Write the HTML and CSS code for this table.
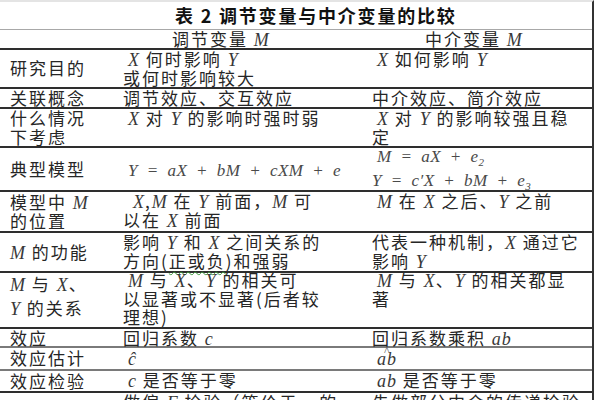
FILE: index.html
```html
<!DOCTYPE html>
<html lang="zh-CN">
<head>
<meta charset="utf-8">
<title>表 2 调节变量与中介变量的比较</title>
<link rel="stylesheet" href="styles.css">
</head>
<body>
<div class="page">
  <div class="title">表 2 调节变量与中介变量的比较</div>

  <div class="row hd">
    <div class="c1"></div>
    <div class="c2">调节变量 <i class="m">M</i></div>
    <div class="c3">中介变量 <i class="m">M</i></div>
  </div>

  <div class="row r1">
    <div class="c1">研究目的</div>
    <div class="c2 ind"><i class="m">X</i> 何时影响 <i class="m">Y</i><br>或何时影响较大</div>
    <div class="c3 ind"><i class="m">X</i> 如何影响 <i class="m">Y</i></div>
  </div>

  <div class="row r2">
    <div class="c1">关联概念</div>
    <div class="c2">调节效应、交互效应</div>
    <div class="c3">中介效应、简介效应</div>
  </div>

  <div class="row r3">
    <div class="c1">什么情况<br>下考虑</div>
    <div class="c2 ind"><i class="m">X</i> 对 <i class="m">Y</i> 的影响时强时弱</div>
    <div class="c3 ind"><i class="m">X</i> 对 <i class="m">Y</i> 的影响较强且稳<br>定</div>
  </div>

  <div class="row r4">
    <div class="c1">典型模型</div>
    <div class="c2 mid ind"><span class="f">Y = aX + bM + cXM + e</span></div>
    <div class="c3 ind fl"><span class="f">M = aX + e<sub>2</sub></span><br><span class="f">Y = c′X + bM + e<sub>3</sub></span></div>
  </div>

  <div class="row r5">
    <div class="c1">模型中 <i class="m">M</i><br>的位置</div>
    <div class="c2 ind2"><i class="m">X</i>,<i class="m">M</i> 在 <i class="m">Y</i> 前面，<i class="m">M</i> 可<br>以在 <i class="m">X</i> 前面</div>
    <div class="c3 ind"><i class="m">M</i> 在 <i class="m">X</i> 之后、<i class="m">Y</i> 之前</div>
  </div>

  <div class="row r6">
    <div class="c1"><i class="m">M</i> 的功能</div>
    <div class="c2">影响 <i class="m">Y</i> 和 <i class="m">X</i> 之间关系的<br>方向(<span class="wavy">正或负</span>)和强弱</div>
    <div class="c3">代表一种机制，<i class="m">X</i> 通过它<br>影响 <i class="m">Y</i></div>
  </div>

  <div class="row r7">
    <div class="c1 c1b"><i class="m">M</i> 与 <i class="m">X</i>、<br><i class="m">Y</i> 的关系</div>
    <div class="c2 ind up"><i class="m">M</i> 与 <i class="m">X</i>、<i class="m">Y</i> 的相关可<br>以显著或不显著(后者较<br>理想)</div>
    <div class="c3 ind up"><i class="m">M</i> 与 <i class="m">X</i>、<i class="m">Y</i> 的相关都显<br>著</div>
  </div>

  <div class="row r8">
    <div class="c1">效应</div>
    <div class="c2">回归系数 <i class="m">c</i></div>
    <div class="c3">回归系数乘积 <i class="m">ab</i></div>
  </div>

  <div class="row r9 light">
    <div class="c1">效应估计</div>
    <div class="c2 ind"><i class="m">ĉ</i></div>
    <div class="c3 ind"><span class="hatbox"><i class="m">ab</i><span class="hat">^</span></span></div>
  </div>

  <div class="row r10 light">
    <div class="c1">效应检验</div>
    <div class="c2 ind"><i class="m">c</i> 是否等于零</div>
    <div class="c3 ind"><i class="m">ab</i> 是否等于零</div>
  </div>

  <div class="row r11">
    <div class="c1"></div>
    <div class="c2">做偏 <i class="m">F</i> 检验（等价于 <i class="m">c</i> 的</div>
    <div class="c3">先做部分中介的传递检验</div>
  </div>
</div>
</body>
</html>
```
FILE: styles.css
```css
html, body {
  margin: 0;
  padding: 0;
  background: #fff;
  height: 400px;
  overflow: hidden;
}

body {
  font-family: "Noto Sans CJK SC", "Noto Sans", sans-serif;
  font-size: 17px;
  letter-spacing: 2px;
  color: #262626;
}

.page {
  width: 594px;
  height: 400px;
  border-right: 2px solid #333;
  overflow: hidden;
  border-top: 2px solid #e4e4e4;
  box-sizing: border-box;
}

.title {
  height: 27px;
  line-height: 27px;
  padding-left: 175px;
  font-weight: 700;
  font-size: 18px;
  letter-spacing: 1.8px;
  color: #111;
}

.row {
  display: grid;
  grid-template-columns: 118px 250px 1fr;
  border-top: 2px solid #2e2e2e;
  line-height: 18.5px;
  box-sizing: border-box;
}

.row.light {
  border-top-color: #7a7a7a;
}

.c1 {
  align-self: center;
  padding-left: 10px;
  white-space: nowrap;
}

.c1b {
  align-self: start;
  line-height: 24px;
  margin-top: -1px;
}

.c2 {
  padding-left: 5px;
  white-space: nowrap;
}

.c3 {
  padding-left: 4px;
  white-space: nowrap;
}

.mid {
  align-self: center;
}

.ind {
  text-indent: 5px;
}

.ind2 {
  text-indent: 10px;
}

.up {
  margin-top: -2px;
}

.hd {
  border-top: 1px solid #a8a8a8;
  height: 19px;
  line-height: 18px;
}

.hd .c2 {
  padding-left: 54px;
}

.hd .c3 {
  padding-left: 57px;
}

.r1 { height: 39px; }
.r2 { height: 20px; }
.r3 { height: 39px; }
.r4 { height: 44px; }
.r5 { height: 41px; }
.r6 { height: 40px; }
.r7 { height: 56px; }
.r8 { height: 19px; }
.r9 { height: 23px; }
.r10 { height: 22px; }
.r11 { height: 40px; }

.r9 .c2, .r9 .c3 {
  align-self: center;
}

.m {
  font-family: "Liberation Serif", "Times New Roman", serif;
  font-style: italic;
  font-size: 18px;
  line-height: 0;
  color: #383838;
  letter-spacing: 1px;
}

.f {
  font-family: "Liberation Serif", "Times New Roman", serif;
  font-style: italic;
  font-size: 17px;
  line-height: 0;
  color: #4a4a4a;
  letter-spacing: 0.5px;
  word-spacing: 4px;
}

.fl {
  line-height: 24px;
  margin-top: -5px;
}

.f sub {
  font-size: 11px;
  line-height: 0;
  vertical-align: -4px;
}

.hatbox {
  position: relative;
  display: inline-block;
  text-indent: 0;
}

.hat {
  position: absolute;
  left: 7px;
  top: -4px;
  font-family: "Liberation Serif", serif;
  font-size: 12px;
  line-height: 12px;
  color: #555;
}

.wavy {
  text-decoration: underline wavy #3c9a3c;
  text-decoration-thickness: 1px;
  text-underline-offset: 3px;
}
```
